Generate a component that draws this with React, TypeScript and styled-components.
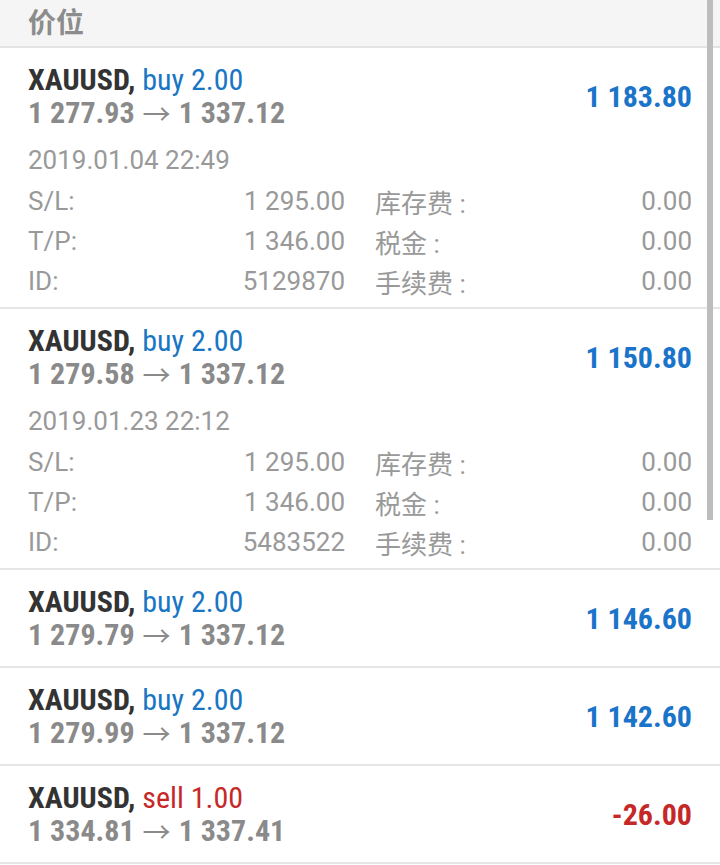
import styled, { createGlobalStyle } from "styled-components";

const GlobalStyle = createGlobalStyle`
  body {
    margin: 0;
    padding: 0;
    background: #ffffff;
  }
`;

const Screen = styled.div`
  position: relative;
  width: 720px;
  height: 865px;
  overflow: hidden;
  background: #ffffff;
  font-family: Roboto, "Noto Sans CJK SC", sans-serif;
`;

const Header = styled.div`
  height: 48px;
  background: #f5f5f5;
  border-bottom: 2px solid #e4e4e4;
  padding-left: 28px;
  display: flex;
  align-items: center;
  font-family: "Noto Sans CJK SC", sans-serif;
  font-size: 28px;
  line-height: 28px;
  font-weight: 700;
  color: #8c8c8c;
  padding-bottom: 4px;
  box-sizing: border-box;
`;

const Card = styled.div`
  border-bottom: 2px solid #e6e6e6;
  padding: 0 28px;
`;

const Top = styled.div<{ $compact: boolean }>`
  display: flex;
  align-items: center;
  justify-content: space-between;
  height: ${(p) => (p.$compact ? "96px" : "auto")};
  padding-top: ${(p) => (p.$compact ? "0" : "15px")};
`;

const Condensed = styled.div`
  font-family: "Roboto Condensed", Roboto, sans-serif;
  font-stretch: condensed;
`;

const Title = styled(Condensed)`
  font-size: 30px;
  line-height: 33px;
  font-weight: 700;
  color: #333333;
`;

const Side = styled.span<{ $sell: boolean }>`
  font-weight: 400;
  color: ${(p) => (p.$sell ? "#c62828" : "#1976c4")};
`;

const Prices = styled(Condensed)`
  display: flex;
  align-items: center;
  gap: 8px;
  font-size: 30px;
  line-height: 33px;
  font-weight: 700;
  color: #8a8a8a;
`;

const Arrow = styled.span`
  font-family: "Noto Sans CJK SC", sans-serif;
  font-stretch: normal;
  font-weight: 400;
  font-size: 28px;
  line-height: 28px;
`;

const Profit = styled(Condensed)<{ $loss: boolean }>`
  font-size: 30px;
  font-weight: 700;
  color: ${(p) => (p.$loss ? "#c62828" : "#1a74c9")};
`;

const DateLine = styled.div`
  font-size: 26px;
  color: #999999;
  margin-top: 17px;
  line-height: 28px;
`;

const Details = styled.div`
  display: grid;
  grid-template-columns: 317px 30px 1fr;
  margin-top: 7px;
  padding-bottom: 6px;
`;

const Row = styled.div`
  display: contents;
`;

const Cell = styled.div`
  height: 40px;
  display: flex;
  align-items: center;
  justify-content: space-between;
  font-size: 26px;
  color: #999999;
  font-family: Roboto, "Noto Sans CJK SC", sans-serif;
`;

const Scrollbar = styled.div`
  position: absolute;
  top: 0;
  right: 7px;
  width: 6px;
  height: 520px;
  background: #bdbdbd;
`;

type Detail = { sl: string; tp: string; id: string; date: string };
type Trade = {
  side: "buy" | "sell";
  vol: string;
  from: string;
  to: string;
  profit: string;
  detail?: Detail;
};

const trades: Trade[] = [
  {
    side: "buy",
    vol: "2.00",
    from: "1 277.93",
    to: "1 337.12",
    profit: "1 183.80",
    detail: { date: "2019.01.04 22:49", sl: "1 295.00", tp: "1 346.00", id: "5129870" },
  },
  {
    side: "buy",
    vol: "2.00",
    from: "1 279.58",
    to: "1 337.12",
    profit: "1 150.80",
    detail: { date: "2019.01.23 22:12", sl: "1 295.00", tp: "1 346.00", id: "5483522" },
  },
  { side: "buy", vol: "2.00", from: "1 279.79", to: "1 337.12", profit: "1 146.60" },
  { side: "buy", vol: "2.00", from: "1 279.99", to: "1 337.12", profit: "1 142.60" },
  { side: "sell", vol: "1.00", from: "1 334.81", to: "1 337.41", profit: "-26.00" },
];

const DetailRow = ({ label, value, fee }: { label: string; value: string; fee: string }) => (
  <Row>
    <Cell>
      <span>{label}</span>
      <span>{value}</span>
    </Cell>
    <Cell />
    <Cell>
      <span>{fee}</span>
      <span>0.00</span>
    </Cell>
  </Row>
);

const App = () => {
  return (
    <>
      <GlobalStyle />
      <Screen>
        <Header>价位</Header>
        {trades.map((t, i) => (
          <Card key={i}>
            <Top $compact={!t.detail}>
              <div>
                <Title>
                  XAUUSD, <Side $sell={t.side === "sell"}>{t.side} {t.vol}</Side>
                </Title>
                <Prices>
                  <span>{t.from}</span>
                  <Arrow>→</Arrow>
                  <span>{t.to}</span>
                </Prices>
              </div>
              <Profit $loss={t.profit.startsWith("-")}>{t.profit}</Profit>
            </Top>
            {t.detail && (
              <>
                <DateLine>{t.detail.date}</DateLine>
                <Details>
                  <DetailRow label="S/L:" value={t.detail.sl} fee="库存费 :" />
                  <DetailRow label="T/P:" value={t.detail.tp} fee="税金 :" />
                  <DetailRow label="ID:" value={t.detail.id} fee="手续费 :" />
                </Details>
              </>
            )}
          </Card>
        ))}
        <Scrollbar />
      </Screen>
    </>
  );
};

export default App;
